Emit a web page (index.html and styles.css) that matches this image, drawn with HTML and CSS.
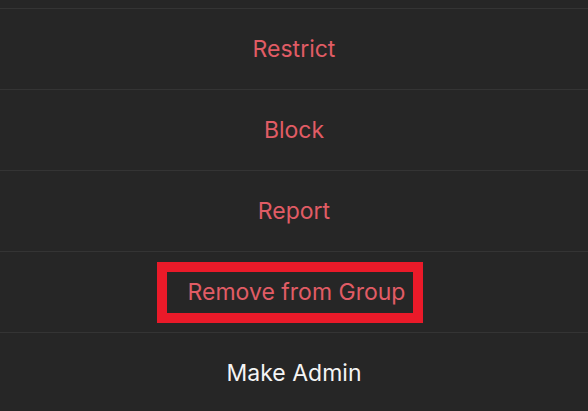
FILE: index.html
```html
<!DOCTYPE html>
<html>
<head>
<meta charset="utf-8">
<link rel="stylesheet" href="styles.css">
</head>
<body>
<div class="sheet">
  <div class="top"></div>
  <div class="row danger">Restrict</div>
  <div class="row danger">Block</div>
  <div class="row danger">Report</div>
  <div class="row danger"><span class="highlight">Remove from Group</span></div>
  <div class="row normal">Make Admin</div>
</div>
</body>
</html>
```
FILE: styles.css
```css
html, body {
  margin: 0;
  padding: 0;
  background: #262626;
}
.sheet {
  width: 588px;
  height: 411px;
  overflow: hidden;
  background: #262626;
  font-family: Inter, "Noto Sans", sans-serif;
  font-size: 23px;
}
.top {
  height: 8px;
}
.row {
  height: 80px;
  border-top: 1px solid #343434;
  display: flex;
  align-items: center;
  justify-content: center;
}
.danger {
  color: #e15c65;
}
.normal {
  color: #f4f4f4;
}
.highlight {
  box-sizing: border-box;
  height: 61px;
  border: 10px solid #ea1a29;
  padding: 0 8px 0 21px;
  margin-right: 8px;
  display: flex;
  align-items: center;
}
```
